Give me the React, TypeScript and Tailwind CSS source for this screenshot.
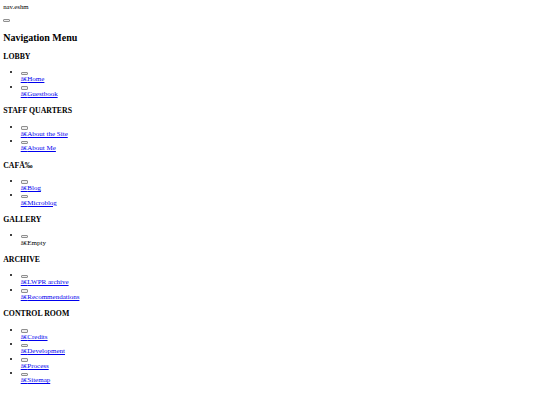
import React from "react";

type Item = { label: string; link?: boolean };
type Section = { title: string; items: Item[] };

const sections: Section[] = [
  { title: "LOBBY", items: [{ label: "Home", link: true }, { label: "Guestbook", link: true }] },
  { title: "STAFF QUARTERS", items: [{ label: "About the Site", link: true }, { label: "About Me", link: true }] },
  { title: "CAFÃ‰", items: [{ label: "Blog", link: true }, { label: "Microblog", link: true }] },
  { title: "GALLERY", items: [{ label: "Empty" }] },
  { title: "ARCHIVE", items: [{ label: "LWPR archive", link: true }, { label: "Recommendations", link: true }] },
  {
    title: "CONTROL ROOM",
    items: [
      { label: "Credits", link: true },
      { label: "Development", link: true },
      { label: "Process", link: true },
      { label: "Sitemap", link: true },
    ],
  },
];

function TinyButton() {
  return (
    <button
      type="button"
      className="inline-block w-[7px] h-[3.5px] border border-[#8f8f8f] bg-[#efefef] rounded-[1px] align-baseline p-0"
    ></button>
  );
}

export default function App() {
  return (
    <div className="m-[3.2px] font-['Liberation_Serif',serif] text-[7px] leading-[7.25px] text-black">
      <div className="text-[6.8px]">nav.eshm</div>
      <p className="my-[6px]">
        <TinyButton />
      </p>
      <h2 className="text-[10px] leading-[11px] font-bold mt-[8px] mb-[9px]">Navigation Menu</h2>
      {sections.map((s) => (
        <React.Fragment key={s.title}>
          <h3 className="text-[7.8px] leading-[9.4px] font-bold my-[8px]">{s.title}</h3>
          <ul className="list-disc list-outside pl-[17.5px] my-[7px]">
            {s.items.map((it) => (
              <li key={it.label}>
                <TinyButton />
                <br />
                {it.link ? (
                  <a href="#" className="text-[#0000ee] underline">
                    {"â€"}
                    {it.label}
                  </a>
                ) : (
                  <span>
                    {"â€"}
                    {it.label}
                  </span>
                )}
              </li>
            ))}
          </ul>
        </React.Fragment>
      ))}
    </div>
  );
}
